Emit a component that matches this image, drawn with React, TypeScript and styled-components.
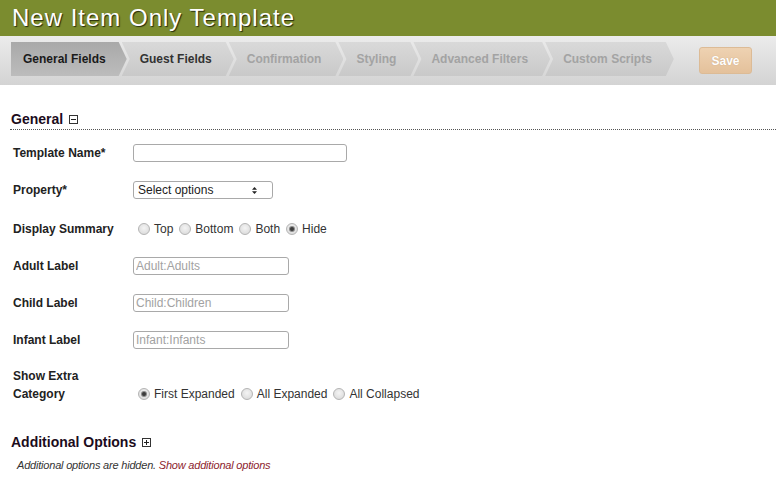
import styled, { createGlobalStyle } from 'styled-components'

const GlobalStyle = createGlobalStyle`
	body {
		margin: 0;
		background: #fff;
		font-family: 'Liberation Sans', Arial, sans-serif;
		color: #222;
	}
`

const Page = styled.div`
	width: 776px;
	min-height: 498px;
`

const TitleBar = styled.div`
	height: 36px;
	background: #7b8c2f;
	padding-left: 12px;
`
const Title = styled.h1`
	margin: 0;
	font-size: 24px;
	font-weight: normal;
	line-height: 35px;
	letter-spacing: 1px;
	color: #fff;
	text-shadow: 1px 1px 1px #262c0c;
`

const Toolbar = styled.div`
	height: 49px;
	display: flex;
	align-items: flex-start;
	padding: 6px 0 0 11px;
	box-sizing: border-box;
	background: linear-gradient(#ececec, #d3d3d3);
`
const Steps = styled.div`
	display: flex;
`
const Step = styled.div<{ $first?: boolean; $active?: boolean; $state: 'on' | 'done' | 'off' }>`
	height: 34px;
	line-height: 34px;
	font-size: 12px;
	font-weight: bold;
	white-space: nowrap;
	padding: ${(p) => (p.$first ? '0 21px 0 12px' : '0 22px 0 18px')};
	margin-left: ${(p) => (p.$first ? '0' : '-5px')};
	color: ${(p) => (p.$state === 'on' ? '#1a1a1a' : p.$state === 'done' ? '#333' : '#a3a3a3')};
	background: ${(p) =>
		p.$active ? 'linear-gradient(#a9a9a9, #bcbcbc)' : 'linear-gradient(#d9d9d9, #c9c9c9)'};
	clip-path: ${(p) =>
		p.$first
			? 'polygon(0 0, calc(100% - 8px) 0, 100% 50%, calc(100% - 8px) 100%, 0 100%)'
			: 'polygon(0 0, calc(100% - 8px) 0, 100% 50%, calc(100% - 8px) 100%, 0 100%, 8px 50%)'};
`
const SaveButton = styled.button`
	margin: 5px 24px 0 auto;
	width: 53px;
	height: 27px;
	border: 1px solid #dcbb96;
	border-radius: 3px;
	background: linear-gradient(#eed2b2, #e4c19b);
	color: #fff;
	font-family: inherit;
	font-size: 12px;
	font-weight: bold;
	text-shadow: 0 0 1px rgba(120, 80, 40, 0.35);
	padding: 0;
`

const SectionHead = styled.h2<{ $rule?: boolean }>`
	margin: ${(p) => (p.$rule ? '26px 0 0 10px' : '21px 0 0 10px')};
	padding: 0 0 ${(p) => (p.$rule ? '2px' : '0')} 1px;
	font-size: 14px;
	line-height: 16px;
	font-weight: bold;
	color: #1c0c1c;
	border-bottom: ${(p) => (p.$rule ? '1px dotted #555' : 'none')};
	display: flex;
	align-items: center;
	gap: 6px;
`

const Form = styled.div`
	margin-top: 5px;
	padding-left: 13px;
`
const Row = styled.div<{ $top?: number; $bottom?: boolean }>`
	display: flex;
	align-items: ${(p) => (p.$bottom ? 'flex-end' : 'center')};
	padding: ${(p) => p.$top ?? 9}px 0 10px;
`
const Label = styled.div`
	width: 120px;
	flex: none;
	box-sizing: border-box;
	padding-right: 8px;
	font-size: 12px;
	font-weight: bold;
	line-height: 18px;
	color: #222;
`
const TextInput = styled.input<{ $w: number }>`
	width: ${(p) => p.$w}px;
	height: 18px;
	box-sizing: border-box;
	border: 1px solid #a9a9a9;
	border-radius: 3px;
	padding: 0 2px;
	margin: 0;
	font-family: inherit;
	font-size: 12px;
	color: #222;
	outline: none;
	&::placeholder {
		color: #a2a2a2;
	}
`
const SelectBox = styled.div`
	width: 140px;
	height: 18px;
	box-sizing: border-box;
	border: 1px solid #a9a9a9;
	border-radius: 3px;
	display: flex;
	align-items: center;
	justify-content: space-between;
	padding: 0 15px 0 4px;
	font-size: 12px;
	color: #222;
`

const Radios = styled.div`
	display: flex;
	align-items: center;
	height: 18px;
	padding-left: 5px;
	gap: 6px;
`
const Option = styled.label`
	display: flex;
	align-items: center;
	gap: 4px;
	font-size: 12px;
	color: #333;
`
const Radio = styled.span<{ $on?: boolean }>`
	width: 12px;
	height: 12px;
	box-sizing: border-box;
	border-radius: 50%;
	border: 1px solid #b4b4b4;
	background: radial-gradient(circle at 50% 40%, #f4f4f4, #d6d6d6);
	display: flex;
	align-items: center;
	justify-content: center;
	&::after {
		content: '';
		display: ${(p) => (p.$on ? 'block' : 'none')};
		width: 4px;
		height: 4px;
		border-radius: 50%;
		background: #3c3c3c;
		box-shadow: 0 0 0 1px #8a8a8a;
	}
`

const Note = styled.p`
	margin: 8px 0 0 17px;
	font-size: 11px;
	line-height: 14px;
	letter-spacing: -0.2px;
	font-style: italic;
	color: #333;
`
const NoteLink = styled.a`
	color: #8c1c2c;
	text-decoration: none;
`

function ToggleIcon({ plus }: { plus?: boolean }) {
	return (
		<svg width="9" height="9" viewBox="0 0 9 9">
			<rect x="0.5" y="0.5" width="8" height="8" fill="#fff" stroke="#333" />
			<line x1="2" y1="4.5" x2="7" y2="4.5" stroke="#222" />
			{plus && <line x1="4.5" y1="2" x2="4.5" y2="7" stroke="#222" />}
		</svg>
	)
}

function SortArrows() {
	return (
		<svg width="5" height="7" viewBox="0 0 5 7">
			<path d="M2.5 0 L5 2.8 L0 2.8 Z" fill="#222" />
			<path d="M0 4.2 L5 4.2 L2.5 7 Z" fill="#222" />
		</svg>
	)
}

function RadioGroup({ options, value }: { options: string[]; value: string }) {
	return (
		<Radios>
			{options.map((o) => (
				<Option key={o}>
					<Radio $on={o === value} />
					{o}
				</Option>
			))}
		</Radios>
	)
}

const steps: { label: string; state: 'on' | 'done' | 'off' }[] = [
	{ label: 'General Fields', state: 'on' },
	{ label: 'Guest Fields', state: 'done' },
	{ label: 'Confirmation', state: 'off' },
	{ label: 'Styling', state: 'off' },
	{ label: 'Advanced Filters', state: 'off' },
	{ label: 'Custom Scripts', state: 'off' },
]

export default function App() {
	return (
		<Page>
			<GlobalStyle />
			<TitleBar>
				<Title>New Item Only Template</Title>
			</TitleBar>
			<Toolbar>
				<Steps>
					{steps.map((s, i) => (
						<Step key={s.label} $first={i === 0} $active={i === 0} $state={s.state}>
							{s.label}
						</Step>
					))}
				</Steps>
				<SaveButton>Save</SaveButton>
			</Toolbar>

			<SectionHead $rule>
				General <ToggleIcon />
			</SectionHead>
			<Form>
				<Row>
					<Label>Template Name*</Label>
					<TextInput $w={214} />
				</Row>
				<Row>
					<Label>Property*</Label>
					<SelectBox>
						<span>Select options</span>
						<SortArrows />
					</SelectBox>
				</Row>
				<Row $top={11}>
					<Label>Display Summary</Label>
					<RadioGroup options={['Top', 'Bottom', 'Both', 'Hide']} value="Hide" />
				</Row>
				<Row>
					<Label>Adult Label</Label>
					<TextInput $w={156} placeholder="Adult:Adults" />
				</Row>
				<Row>
					<Label>Child Label</Label>
					<TextInput $w={156} placeholder="Child:Children" />
				</Row>
				<Row>
					<Label>Infant Label</Label>
					<TextInput $w={156} placeholder="Infant:Infants" />
				</Row>
				<Row $top={8} $bottom>
					<Label>Show Extra Category</Label>
					<RadioGroup
						options={['First Expanded', 'All Expanded', 'All Collapsed']}
						value="First Expanded"
					/>
				</Row>
			</Form>

			<SectionHead>
				Additional Options <ToggleIcon plus />
			</SectionHead>
			<Note>
				Additional options are hidden. <NoteLink href="#">Show additional options</NoteLink>
			</Note>
		</Page>
	)
}
